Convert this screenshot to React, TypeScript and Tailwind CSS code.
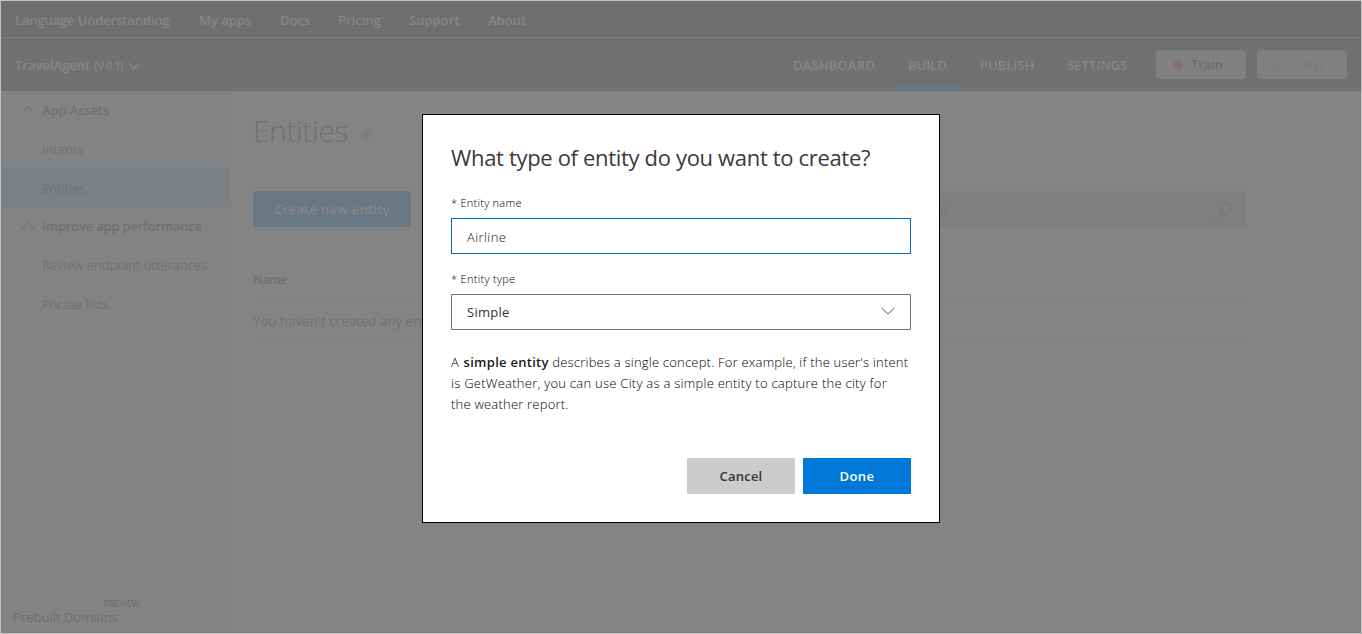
import React from 'react';

const topLinks = [
  { label: 'Language Understanding', cls: 'w-[184px] tracking-[-0.14px]' },
  { label: 'My apps', cls: 'w-[81px]' },
  { label: 'Docs', cls: 'w-[58px]' },
  { label: 'Pricing', cls: 'w-[71px]' },
  { label: 'Support', cls: 'w-[79px]' },
  { label: 'About', cls: '' },
];

function Chevron({ className, up = false }: { className: string; up?: boolean }) {
  return (
    <svg className={className} viewBox="0 0 14 8" fill="none" stroke="currentColor">
      <path d={up ? 'M0.5 7.2 L7 0.8 L13.5 7.2' : 'M0.5 0.8 L7 7.2 L13.5 0.8'} />
    </svg>
  );
}

function Section({ title, cls }: { title: string; cls: string }) {
  return (
    <div className="mx-2 flex h-[38px] items-center border-b border-[#7f7f7f] pl-3 text-[13px] font-semibold text-[#707070]">
      <Chevron up className="mr-[7px] h-2 w-[14px] text-[#6c6c6c]" />
      <span className={`mt-[3px] ${cls}`}>{title}</span>
    </div>
  );
}

function Item({ title, cls, active = false }: { title: string; cls: string; active?: boolean }) {
  return (
    <div
      className={`flex h-[39px] items-center pt-[2px] pl-[41px] text-[13px] ${
        active ? 'bg-[#7b8084] text-[#6f7478]' : 'text-[#727272]'
      }`}
    >
      <span className={cls}>{title}</span>
    </div>
  );
}

function Dialog() {
  return (
    <div className="absolute top-[113px] left-[421px] flex h-[409px] w-[518px] flex-col border border-black bg-white px-7 text-[#333]">
      <h2 className="mt-[26px] h-8 text-[22px] leading-8 tracking-[-0.33px] whitespace-nowrap text-[#3a3a3a]">
        What type of entity do you want to create?
      </h2>
      <label className="mt-[22px] h-4 text-[11px] leading-4 font-light tracking-[0.26px] text-black">* Entity name</label>
      <div className="mt-[7px] flex h-9 items-center border border-[#0070cb] pl-[15px] text-[13px] font-light text-[#111]">
        <span className="mt-[3px] tracking-[0.4px]">Airline</span>
      </div>
      <label className="mt-[17px] h-4 text-[11px] leading-4 font-light tracking-[0.3px] text-black">* Entity type</label>
      <div className="mt-[7px] flex h-9 items-center justify-between rounded-[1px] border border-[#707070] pr-[15px] pl-[15px] text-[13px] text-[#333]">
        <span className="mt-[2px] tracking-[0.25px]">Simple</span>
        <Chevron className="mt-[-3px] h-2 w-[14px] text-[#555]" />
      </div>
      <p className="mt-[22px] text-[13px] leading-[21px] font-light tracking-[0.21px] whitespace-nowrap text-black">
        <span>
          A <b className="ml-px font-semibold tracking-[0.27px] text-[#1a1a1a]">simple entity</b> describes a single
          concept. For example, if the user's intent
        </span>
        <br />
        <span className="tracking-[0.26px]">
          is GetWeather, you can use City as a simple entity to capture the city for
        </span>
        <br />
        <span>the weather report.</span>
      </p>
      <div className="mt-[43px] flex justify-end gap-2 text-[13px] font-semibold">
        <button className="h-9 w-[108px] rounded-[1px] bg-[#ccc] pt-[2px] tracking-[0.2px] text-[#333]">Cancel</button>
        <button className="h-9 w-[108px] rounded-[1px] bg-[#0078d9] pt-[2px] tracking-[0.4px] text-white">Done</button>
      </div>
    </div>
  );
}

export default function App() {
  return (
    <div className="relative flex h-[634px] w-[1362px] flex-col overflow-hidden border border-[#c2c2c2] bg-[#848484] font-['Open_Sans','Noto_Sans',sans-serif]">
      <nav className="flex h-[37px] items-center border-b border-[#858585] bg-[#6f6f6f] pt-[3px] pl-[14px] text-[13px] font-semibold text-[#868686]">
        {topLinks.map((l) => (
          <span key={l.label} className={`${l.cls} whitespace-nowrap`}>
            {l.label}
          </span>
        ))}
      </nav>
      <header className="flex h-[53px] shrink-0 bg-[#717171] pl-[14px] text-[13px] font-semibold text-[#868686]">
        <div className="flex w-[778px] items-center pt-[2px]">
          <span>TravelAgent</span>
          <span className="mt-px ml-1 text-[11px] tracking-[-0.5px]">(V 0.1)</span>
          <svg className="mt-px ml-[5px] h-2 w-3" viewBox="0 0 12 8" fill="none" stroke="currentColor" strokeWidth="1.5">
            <path d="M0.5 1L6 6.5L11.5 1" />
          </svg>
        </div>
        <div className="flex w-[115px] items-center pt-[2px] tracking-[0.2px]">DASHBOARD</div>
        <div className="relative flex w-[72px] items-center pt-[2px]">
          BUILD
          <i className="absolute bottom-px left-[-17px] h-1 w-[73px] bg-[#6b7781]" />
        </div>
        <div className="flex w-[87px] items-center pt-[2px]">PUBLISH</div>
        <div className="flex w-[89px] items-center pt-[2px] tracking-[0.1px]">SETTINGS</div>
        <div className="mt-3 flex h-[29px] w-[90px] items-center rounded-sm bg-[#808080] pl-[18px] text-[#6e6e6e]">
          <i className="mr-[8px] h-[9px] w-[9px] rounded-full bg-[#876e73]" />
          <span className="tracking-[-0.1px]">Train</span>
        </div>
        <div className="mt-3 ml-[11px] flex h-[29px] w-[90px] items-center rounded-sm bg-[#808080] pl-[15px] text-[#7a7a7a]">
          <svg className="mr-3 h-[14px] w-[14px]" viewBox="0 0 14 14" fill="none" stroke="currentColor">
            <path d="M14 7.5H1M7 1.5L1 7.5l6 6" />
          </svg>
          <span>Test</span>
        </div>
      </header>
      <div className="flex min-h-0 flex-1">
        <aside className="flex w-[230px] shrink-0 flex-col border-r border-[#808080] bg-[#838383]">
          <Section title="App Assets" cls="tracking-[-0.1px]" />
          <Item title="Intents" cls="tracking-[-0.15px]" />
          <Item title="Entities" cls="tracking-[-0.15px]" active />
          <Section title="Improve app performance" cls="tracking-[-0.2px]" />
          <Item title="Review endpoint utterances" cls="tracking-[-0.16px]" />
          <Item title="Phrase lists" cls="tracking-[-0.25px]" />
          <div className="mt-auto h-9 border-t border-[#7f7f7f] pl-3 text-[13px] text-[#6e6e6e]">
            <div className="mt-px h-[9px] pl-[91px] text-[9px] leading-[9px] tracking-[-0.2px]">PREVIEW</div>
            <div className="leading-[18px] font-medium">Prebuilt Domains</div>
          </div>
        </aside>
        <main className="flex flex-1 flex-col pl-[22px] text-[13px] text-[#707070]">
          <div className="mt-[20px] flex h-10 items-center">
            <h1 className="w-[95px] text-[30px] leading-10 font-light tracking-[-0.45px]">Entities</h1>
            <span className="mt-[10px] ml-[11px] flex h-4 w-4 items-center justify-center rounded-full bg-[#828282] text-[10px]">
              ?
            </span>
          </div>
          <div className="mt-[40px] flex h-9">
            <button className="w-[158px] rounded-[2px] bg-[#6a7883] pt-[2px] font-semibold tracking-[0.26px] text-[#868686]">
              Create new entity
            </button>
            <div className="ml-[437px] flex w-[399px] items-center justify-between bg-[#7f7f7f] pr-[14px] pl-[13px] text-[#747474]">
              <span className="mt-[2px] w-[88px] text-right text-[12px]">Search entities</span>
              <svg className="mt-[3px] h-5 w-5" viewBox="0 0 20 20" fill="none" stroke="currentColor">
                <circle cx="13" cy="8" r="5.8" />
                <path d="M9 12L1.5 19.5" />
              </svg>
            </div>
          </div>
          <div className="mt-[33px] flex h-[40px] w-[994px] border-b border-[#808080] pt-[10px] text-[12px] leading-5 font-semibold tracking-[-0.2px]">
            Name
          </div>
          <div className="flex h-[43px] w-[994px] items-center border-b border-[#808080] pt-[2px]">
            <span className="tracking-[0.17px] whitespace-nowrap">You haven't created any en</span>
          </div>
        </main>
      </div>
      <Dialog />
    </div>
  );
}
